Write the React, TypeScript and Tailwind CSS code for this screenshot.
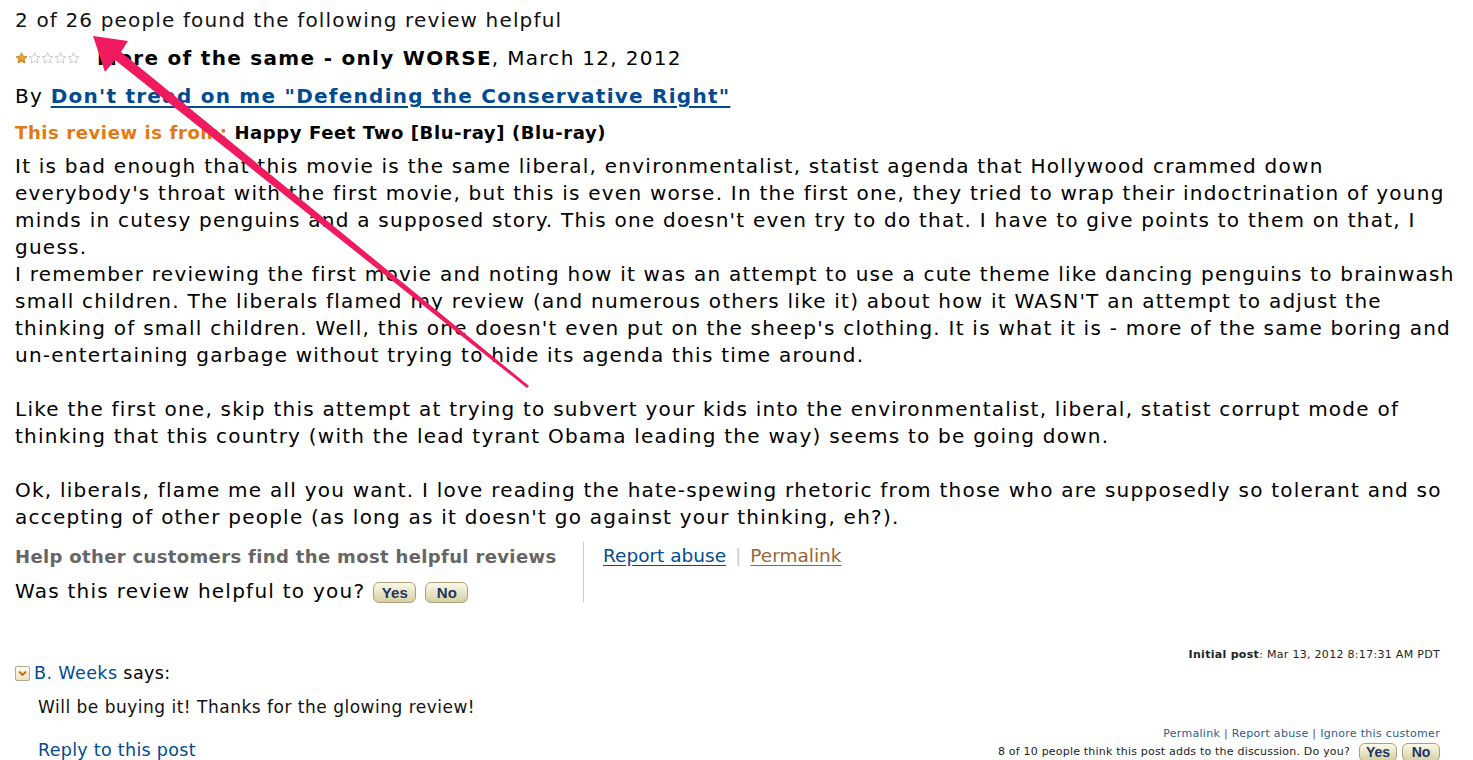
import React from 'react';

const bodyLines: string[] = [
  "It is bad enough that this movie is the same liberal, environmentalist, statist agenda that Hollywood crammed down",
  "everybody's throat with the first movie, but this is even worse. In the first one, they tried to wrap their indoctrination of young",
  "minds in cutesy penguins and a supposed story. This one doesn't even try to do that. I have to give points to them on that, I",
  "guess.",
  "I remember reviewing the first movie and noting how it was an attempt to use a cute theme like dancing penguins to brainwash",
  "small children. The liberals flamed my review (and numerous others like it) about how it WASN'T an attempt to adjust the",
  "thinking of small children. Well, this one doesn't even put on the sheep's clothing. It is what it is - more of the same boring and",
  "un-entertaining garbage without trying to hide its agenda this time around.",
  "",
  "Like the first one, skip this attempt at trying to subvert your kids into the environmentalist, liberal, statist corrupt mode of",
  "thinking that this country (with the lead tyrant Obama leading the way) seems to be going down.",
  "",
  "Ok, liberals, flame me all you want. I love reading the hate-spewing rhetoric from those who are supposedly so tolerant and so",
  "accepting of other people (as long as it doesn't go against your thinking, eh?).",
];

function Star({ filled }: { filled: boolean }) {
  return (
    <svg width="13" height="12" viewBox="0 0 24 23">
      <defs>
        <linearGradient id="sg" x1="0" y1="0" x2="0" y2="1">
          <stop offset="0" stopColor="#f7c04a" />
          <stop offset="1" stopColor="#e08a10" />
        </linearGradient>
      </defs>
      <path
        d="M12 1.5l3.1 6.6 7.2.9-5.3 5 1.4 7.1L12 17.6l-6.4 3.5 1.4-7.1-5.3-5 7.2-.9z"
        fill={filled ? 'url(#sg)' : '#ffffff'}
        stroke={filled ? '#b56a08' : '#b9b9a8'}
        strokeWidth="1.4"
        strokeLinejoin="round"
      />
    </svg>
  );
}

function VoteButton({ label, small }: { label: string; small?: boolean }) {
  return (
    <span
      className={
        small
          ? 'inline-flex items-center justify-center h-[19px] w-[38px] rounded-[6px] border border-[#a8a27a] bg-gradient-to-b from-[#fbf9ea] to-[#d6d0a2] text-[14px] font-bold text-[#1d3564] leading-none tracking-normal'
          : 'inline-flex items-center justify-center h-[21px] w-[43px] rounded-[6px] border border-[#a8a27a] bg-gradient-to-b from-[#fbf9ea] to-[#d6d0a2] text-[15px] font-bold text-[#1d3564] leading-none tracking-normal'
      }
      style={{ fontFamily: '"Liberation Sans Narrow", "Liberation Sans", Arial, sans-serif' }}
    >
      {label}
    </span>
  );
}

export default function App() {
  return (
    <div
      className="relative w-[1473px] h-[760px] overflow-hidden bg-white text-black"
      style={{ fontFamily: '"DejaVu Sans", Verdana, sans-serif' }}
    >
      <div className="px-[15px] pt-[1px]">
        {/* Review header */}
        <div className="h-[38px] flex items-center text-[20px] tracking-[1.15px] text-[#111]">
          2 of 26 people found the following review helpful
        </div>
        <div className="h-[38px] flex items-center text-[20px] tracking-[1.3px]">
          <span className="flex mr-[17px]">
            <Star filled />
            <Star filled={false} />
            <Star filled={false} />
            <Star filled={false} />
            <Star filled={false} />
          </span>
          <span className="font-bold">More of the same - only WORSE</span>
          <span>, March 12, 2012</span>
        </div>
        <div className="h-[38px] flex items-center text-[20px] tracking-[1.25px]">
          <span>By&nbsp;</span>
          <a className="font-bold text-[#004b91] underline underline-offset-[3px]">
            Don't tread on me "Defending the Conservative Right"
          </a>
        </div>
        <div className="h-[34px] flex items-center text-[18px] tracking-[0.6px] font-bold">
          <span className="text-[#e47911]">This review is from:&nbsp;</span>
          <span>Happy Feet Two [Blu-ray] (Blu-ray)</span>
        </div>

        {/* Review body */}
        <div className="mt-[4px] text-[20px] tracking-[1.24px] leading-[27px]">
          {bodyLines.map((line, i) => (
            <div key={i} className="whitespace-nowrap h-[27px]">
              {line}
            </div>
          ))}
        </div>

        {/* Helpful / links */}
        <div className="mt-[11px] flex">
          <div className="w-[568px] pr-[10px]">
            <div className="h-[28px] flex items-center text-[18px] tracking-[0.35px] font-bold text-[#666666]">
              Help other customers find the most helpful reviews
            </div>
            <div className="h-[42px] flex items-center text-[20px] tracking-[1.25px]">
              <span className="mr-[8px]">Was this review helpful to you?</span>
              <span className="flex gap-[9px] mt-[2px]">
                <VoteButton label="Yes" />
                <VoteButton label="No" />
              </span>
            </div>
          </div>
          <div className="h-[60px] border-l border-[#cccccc] pl-[19px]">
            <div className="h-[28px] flex items-center text-[18.5px]">
              <a className="text-[#004b91] underline underline-offset-[3px]">Report abuse</a>
              <span className="mx-[9px] text-[#cccccc]">|</span>
              <a className="text-[#996633] underline underline-offset-[3px]">Permalink</a>
            </div>
          </div>
        </div>

        {/* Comment */}
        <div className="mt-[34px]">
          <div className="h-[18px] flex items-center justify-end pr-[18px] text-[11px] tracking-[0.3px] text-[#222]">
            <span className="font-bold">Initial post</span>
            <span>: Mar 13, 2012 8:17:31 AM PDT</span>
          </div>
          <div className="h-[18px] flex items-center text-[17.5px] tracking-[0.4px]">
            <span className="mr-[4px] flex items-center justify-center w-[15px] h-[15px] rounded-[2px] border border-[#b8a888] bg-gradient-to-b from-[#fffaf0] to-[#efe3c8]">
              <svg width="9" height="7" viewBox="0 0 9 7">
                <path d="M1 1.5l3.5 3.5L8 1.5" fill="none" stroke="#c06a10" strokeWidth="1.8" />
              </svg>
            </span>
            <a className="text-[#004b91]">B. Weeks</a>
            <span>&nbsp;says:</span>
          </div>
          <div className="pl-[23px] mt-[16px] h-[20px] flex items-center text-[17px] tracking-[0.5px] text-[#111]">
            Will be buying it! Thanks for the glowing review!
          </div>
          <div className="mt-[9px] flex items-end justify-between pr-[18px]">
            <a className="ml-[23px] text-[17.5px] tracking-[0.3px] text-[#004b91] leading-[22px] border-b border-dotted border-[#333]">
              Reply to this post
            </a>
            <div className="flex flex-col items-end text-[11px] tracking-[0.3px]">
              <div className="h-[15px] flex items-center text-[#2a5d8c]">
                Permalink&nbsp;<span className="text-[#555]">|</span>&nbsp;Report abuse&nbsp;
                <span className="text-[#555]">|</span>&nbsp;Ignore this customer
              </div>
              <div className="h-[20px] flex items-center text-[#222] tracking-[0.2px]">
                <span className="mr-[9px]">8 of 10 people think this post adds to the discussion. Do you?</span>
                <span className="flex gap-[5px]">
                  <VoteButton label="Yes" small />
                  <VoteButton label="No" small />
                </span>
              </div>
            </div>
          </div>
        </div>
      </div>

      {/* Annotation arrow */}
      <svg className="absolute inset-0 pointer-events-none" width="1473" height="760" viewBox="0 0 1473 760">
        <polygon
          points="93,36 128,41 121,52 529,386 527,388 115,60 105,72"
          fill="#f01a5f"
          strokeLinejoin="round"
        />
      </svg>
    </div>
  );
}
